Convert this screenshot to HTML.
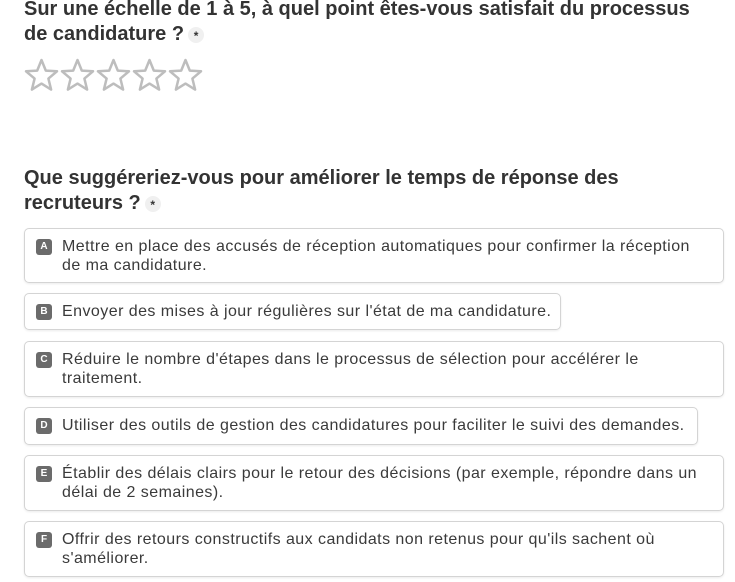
<!DOCTYPE html>
<html><head><meta charset="utf-8"><style>
body{margin:0;width:735px;height:582px;background:#fff;font-family:"Liberation Sans",sans-serif;color:#333;position:relative;overflow:hidden}
.t{position:absolute;left:24px;font-weight:bold;font-size:20px;line-height:25px;color:#333;white-space:nowrap}
.req{display:inline-block;width:16px;height:16px;border-radius:8px;background:#f0f0f0;font-size:12px;line-height:19px;text-align:center;vertical-align:middle;margin-left:4px;font-weight:bold}
.o{position:absolute;left:24px;box-sizing:border-box;border:1px solid #d4d4d4;border-radius:5px;box-shadow:0 1px 2px rgba(0,0,0,.08);font-size:16px;letter-spacing:0.45px;line-height:19px;padding:8px 10px 8px 37px;white-space:nowrap;color:#3a3a3a}
.b{position:absolute;left:11px;top:10px;width:16px;height:16px;border-radius:3px;background:#6b6b6b;color:#fff;font-size:10px;font-weight:bold;line-height:16px;text-align:center;letter-spacing:0}
.stars{position:absolute;left:24px;top:58px}
</style></head><body>
<div class="t" style="top:-3px">Sur une échelle de 1 à 5, à quel point êtes-vous satisfait du processus<br>de candidature ?<span class="req">*</span></div>
<div class="stars"><svg width="182" height="36" viewBox="0 0 182 36">
<g fill="none" stroke="#bdbdbd" stroke-width="2.5" stroke-linejoin="round">
<path d="M17.5 2 L21.8 12.6 L33 13.3 L24.4 20.6 L27.1 31.6 L17.5 25.6 L7.9 31.6 L10.6 20.6 L2 13.3 L13.2 12.6 Z"/>
<path transform="translate(36 0)" d="M17.5 2 L21.8 12.6 L33 13.3 L24.4 20.6 L27.1 31.6 L17.5 25.6 L7.9 31.6 L10.6 20.6 L2 13.3 L13.2 12.6 Z"/>
<path transform="translate(72 0)" d="M17.5 2 L21.8 12.6 L33 13.3 L24.4 20.6 L27.1 31.6 L17.5 25.6 L7.9 31.6 L10.6 20.6 L2 13.3 L13.2 12.6 Z"/>
<path transform="translate(108 0)" d="M17.5 2 L21.8 12.6 L33 13.3 L24.4 20.6 L27.1 31.6 L17.5 25.6 L7.9 31.6 L10.6 20.6 L2 13.3 L13.2 12.6 Z"/>
<path transform="translate(144 0)" d="M17.5 2 L21.8 12.6 L33 13.3 L24.4 20.6 L27.1 31.6 L17.5 25.6 L7.9 31.6 L10.6 20.6 L2 13.3 L13.2 12.6 Z"/>
</g></svg></div>
<div class="t" style="top:166px">Que suggéreriez-vous pour améliorer le temps de réponse des<br>recruteurs ?<span class="req">*</span></div>
<div class="o" style="top:228px;width:700px;height:55px"><span class="b">A</span>Mettre en place des accusés de réception automatiques pour confirmer la réception<br>de ma candidature.</div>
<div class="o" style="top:293px;width:537px;height:37px"><span class="b">B</span>Envoyer des mises à jour régulières sur l'état de ma candidature.</div>
<div class="o" style="top:341px;width:700px;height:56px"><span class="b">C</span>Réduire le nombre d'étapes dans le processus de sélection pour accélérer le<br>traitement.</div>
<div class="o" style="top:407px;width:674px;height:38px"><span class="b">D</span>Utiliser des outils de gestion des candidatures pour faciliter le suivi des demandes.</div>
<div class="o" style="top:455px;width:700px;height:56px"><span class="b">E</span>Établir des délais clairs pour le retour des décisions (par exemple, répondre dans un<br>délai de 2 semaines).</div>
<div class="o" style="top:521px;width:700px;height:56px"><span class="b">F</span>Offrir des retours constructifs aux candidats non retenus pour qu'ils sachent où<br>s'améliorer.</div>
</body></html>
